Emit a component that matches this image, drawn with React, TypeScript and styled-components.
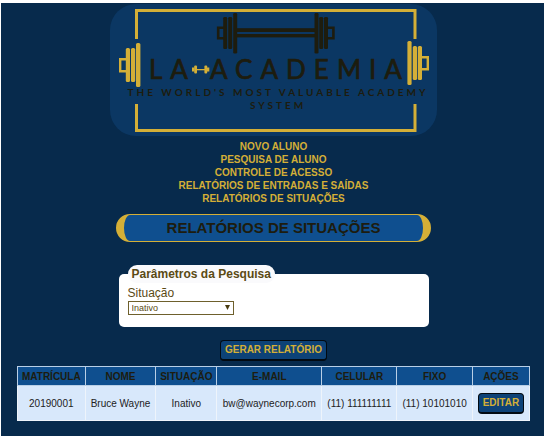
import React, { useState } from "react";
import styled, { createGlobalStyle } from "styled-components";

const gold = "#d4af37";
const navy = "#072a4c";
const blue = "#0f4f8f";
const ink = "#1d1c0e";

const GlobalStyle = createGlobalStyle`
  * { box-sizing: border-box; }
  body {
    margin: 0;
    background: #fff;
    font-family: "Liberation Sans", Arial, sans-serif;
  }
`;

const Page = styled.div`
  margin: 3px 5px 5px 1px;
  padding: 1px 14px 15px 16px;
  background: ${navy};
  display: flex;
  flex-direction: column;
  align-items: center;
`;

const Logo = styled.svg`
  display: block;
  width: 100%;
  max-width: 327px;
  height: auto;
  border-radius: 26px;
  background: #0b3763;
`;

const Wordmark = styled.text`
  font-family: Lato, sans-serif;
  font-size: 26px;
  letter-spacing: 8px;
  fill: ${ink};
  stroke: ${ink};
  stroke-width: 0.7px;
`;

const Tagline = styled.text`
  font-family: Lato, sans-serif;
  font-size: 10px;
  font-weight: 700;
  letter-spacing: 3px;
  text-anchor: middle;
  fill: ${ink};
`;

const Nav = styled.nav`
  margin-top: 4px;
  display: flex;
  flex-direction: column;
  align-items: center;
`;

const NavLink = styled.a`
  font-size: 10px;
  line-height: 13px;
  font-weight: 700;
  color: ${gold};
  text-decoration: none;
  text-transform: uppercase;
`;

const Title = styled.h1`
  margin: 9px 0 0;
  width: 100%;
  max-width: 315px;
  padding: 3px 0 4px;
  border: solid ${gold};
  border-width: 1px 8px;
  border-radius: 14px;
  background: ${blue};
  color: ${ink};
  font-size: 15px;
  line-height: 19px;
  text-align: center;
  text-transform: uppercase;
`;

const Form = styled.form`
  width: 100%;
  max-width: 310px;
  margin-top: 23px;
  display: flex;
  flex-direction: column;
  align-items: center;
`;

const Panel = styled.fieldset`
  width: 100%;
  margin: 0;
  padding: 3px 9px 12px;
  border: 0;
  border-radius: 5px;
  background: #fff;
  color: #5b4a14;
`;

const Legend = styled.legend`
  padding: 0 4px;
  border-radius: 9px;
  background: #fafafc;
  font-size: 12px;
  line-height: 18px;
  font-weight: 700;
`;

const Label = styled.label`
  display: block;
  font-size: 12px;
  line-height: 15px;
`;

const SelectBox = styled.div`
  position: relative;
  width: 106px;
  svg {
    position: absolute;
    right: 4px;
    top: 4px;
    pointer-events: none;
  }
`;

const Select = styled.select`
  display: block;
  appearance: none;
  width: 100%;
  height: 14px;
  padding: 0 3px;
  border: 1px solid #6e602c;
  border-radius: 0;
  background: #fff;
  color: #5b4a14;
  font-family: inherit;
  font-size: 9px;
  line-height: 12px;
`;

const Button = styled.button`
  padding: 3px 4px 4px;
  border: solid #020a12;
  border-width: 1px 1px 2px;
  border-radius: 4px;
  background: #0d4277;
  color: ${gold};
  font-family: inherit;
  font-size: 10px;
  line-height: 11px;
  font-weight: 700;
  text-transform: uppercase;
`;

const Submit = styled(Button)`
  margin-top: 13px;
`;

const Table = styled.table`
  width: 100%;
  margin-top: 5px;
  border-collapse: collapse;
  font-size: 10px;
  text-align: center;
  color: #222;
`;

const HeadCell = styled.th`
  padding: 0 3px;
  height: 19px;
  border: 1px solid #b9cfe6;
  background: ${blue};
  color: ${ink};
  text-transform: uppercase;
`;

const Cell = styled.td`
  padding: 0 4px;
  height: 35px;
  border: 1px solid #eef4fb;
  background: #d8e8fb;
  white-space: nowrap;
`;

const links = [
  "Novo Aluno",
  "Pesquisa de Aluno",
  "Controle de Acesso",
  "Relatórios de Entradas e Saídas",
  "Relatórios de Situações",
];

const columns = ["Matrícula", "Nome", "Situação", "E-mail", "Celular", "Fixo", "Ações"];

const students = [
  ["20190001", "Bruce Wayne", "Inativo", "bw@waynecorp.com", "(11) 111111111", "(11) 10101010"],
];

function AcademyLogo() {
  return (
    <Logo viewBox="110 4 327 132" role="img" aria-label="LA Academia">
      <g fill="none" stroke={gold} strokeWidth="3">
        <path d="M136.5 39V10.5H415V39" />
        <path d="M136.5 104V130.5H415V104" />
      </g>
      <g fill={gold}>
        <rect x="136" y="43" width="4.4" height="44" rx="1.5" />
        <rect x="131" y="48" width="4.2" height="34" rx="1.5" />
        <rect x="125.8" y="48" width="4.2" height="34" rx="1.5" />
        <rect x="407.4" y="41" width="4.2" height="44" rx="1.5" />
        <rect x="412.8" y="46" width="4.2" height="34" rx="1.5" />
        <rect x="417.8" y="46" width="4.2" height="34" rx="1.5" />
        <rect x="192" y="67.5" width="2.5" height="4" />
        <rect x="194.2" y="65.5" width="2.8" height="8" rx="1" />
        <rect x="197" y="69" width="8" height="1.3" />
        <rect x="204.4" y="65.5" width="2.8" height="8" rx="1" />
        <rect x="206.8" y="67.5" width="2.5" height="4" />
      </g>
      <g fill="none" stroke={gold} strokeWidth="2.4">
        <path d="M126 59.2H120.2V71.2H126" />
        <path d="M422 57.2H427.8V69.2H422" />
      </g>
      <g fill={ink}>
        <rect x="223.2" y="17" width="4" height="32" rx="1.3" />
        <rect x="228.2" y="17" width="4" height="32" rx="1.3" />
        <rect x="233.2" y="13" width="4" height="40.5" rx="1.3" />
        <rect x="237" y="28.2" width="78" height="3.8" />
        <rect x="237" y="34" width="78" height="3.4" />
        <rect x="314.5" y="13" width="4" height="40.5" rx="1.3" />
        <rect x="319.2" y="17" width="4" height="32" rx="1.3" />
        <rect x="324" y="17" width="4" height="32" rx="1.3" />
      </g>
      <g fill="none" stroke={ink} strokeWidth="2.6">
        <path d="M224 27.8H218.2V38.2H224" />
        <path d="M327.6 27.8H333.4V38.2H327.6" />
      </g>
      <Wordmark x="149" y="79">LA</Wordmark>
      <Wordmark x="210" y="79">ACADEMIA</Wordmark>
      <Tagline x="278" y="96">THE WORLD'S MOST VALUABLE ACADEMY</Tagline>
      <Tagline x="278" y="109">SYSTEM</Tagline>
    </Logo>
  );
}

export default function App() {
  const [status, setStatus] = useState("Inativo");
  return (
    <>
      <GlobalStyle />
      <Page>
        <AcademyLogo />
        <Nav>
          {links.map((link) => (
            <NavLink key={link} href="#">{link}</NavLink>
          ))}
        </Nav>
        <Title>Relatórios de Situações</Title>
        <Form onSubmit={(e) => e.preventDefault()}>
          <Panel>
            <Legend>Parâmetros da Pesquisa</Legend>
            <Label htmlFor="status">Situação</Label>
            <SelectBox>
              <Select id="status" value={status} onChange={(e) => setStatus(e.target.value)}>
                <option>Ativo</option>
                <option>Inativo</option>
              </Select>
              <svg width="5" height="5" viewBox="0 0 5 5" aria-hidden="true">
                <path d="M0 0H5L2.5 5Z" fill="#4a3c10" />
              </svg>
            </SelectBox>
          </Panel>
          <Submit type="submit">Gerar Relatório</Submit>
        </Form>
        <Table>
          <thead>
            <tr>
              {columns.map((name) => (
                <HeadCell key={name} scope="col">{name}</HeadCell>
              ))}
            </tr>
          </thead>
          <tbody>
            {students.map((student) => (
              <tr key={student[0]}>
                {student.map((value) => (
                  <Cell key={value}>{value}</Cell>
                ))}
                <Cell>
                  <Button type="button">Editar</Button>
                </Cell>
              </tr>
            ))}
          </tbody>
        </Table>
      </Page>
    </>
  );
}
